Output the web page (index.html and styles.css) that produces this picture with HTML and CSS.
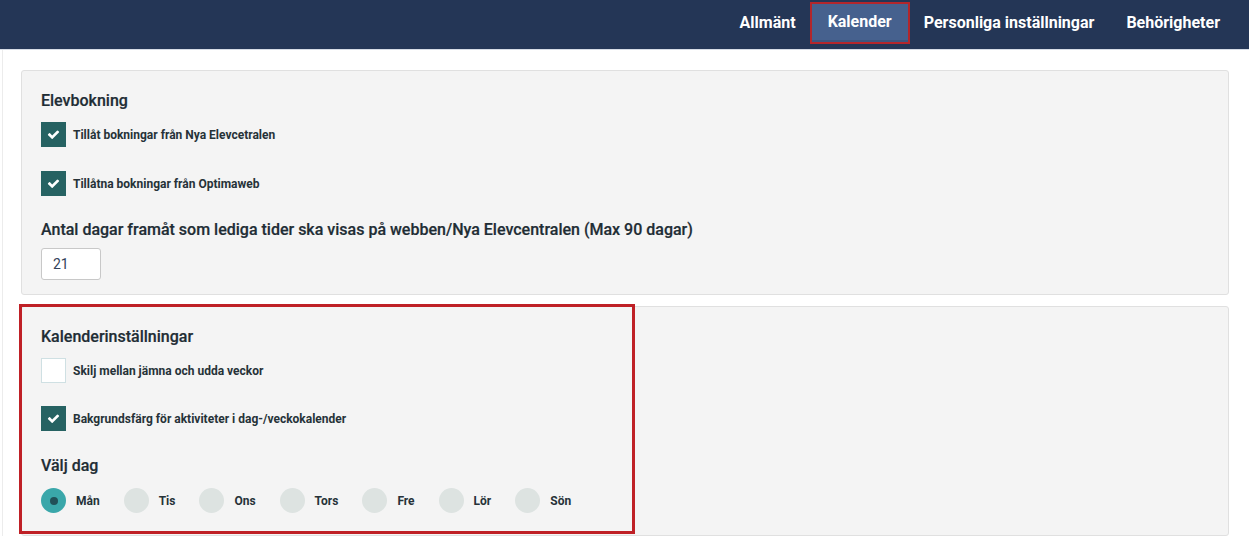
FILE: index.html
```html
<!DOCTYPE html>
<html lang="sv">
<head>
<meta charset="utf-8">
<title>Kalender</title>
<link rel="stylesheet" href="styles.css">
</head>
<body>
<header class="topbar">
  <nav class="tabs">
    <a class="tab">Allmänt</a>
    <a class="tab active">Kalender</a>
    <a class="tab">Personliga inställningar</a>
    <a class="tab">Behörigheter</a>
  </nav>
</header>
<main class="content">
  <section class="panel panel1">
    <h2 class="heading">Elevbokning</h2>
    <label class="check-row">
      <span class="box checked"><svg class="tick" viewBox="0 0 1792 1792"><path d="M1671 566q0 40-28 68l-724 724-136 136q-28 28-68 28t-68-28l-136-136-362-362q-28-28-28-68t28-68l136-136q28-28 68-28t68 28l294 295 656-657q28-28 68-28t68 28l136 136q28 28 28 68z" fill="#fff"/></svg></span>
      <span class="check-label">Tillåt bokningar från Nya Elevcetralen</span>
    </label>
    <label class="check-row">
      <span class="box checked"><svg class="tick" viewBox="0 0 1792 1792"><path d="M1671 566q0 40-28 68l-724 724-136 136q-28 28-68 28t-68-28l-136-136-362-362q-28-28-28-68t28-68l136-136q28-28 68-28t68 28l294 295 656-657q28-28 68-28t68 28l136 136q28 28 28 68z" fill="#fff"/></svg></span>
      <span class="check-label">Tillåtna bokningar från Optimaweb</span>
    </label>
    <h2 class="heading heading-days">Antal dagar framåt som lediga tider ska visas på webben/Nya Elevcentralen (Max 90 dagar)</h2>
    <div class="input">21</div>
  </section>
  <section class="panel panel2">
    <div class="highlight"></div>
    <h2 class="heading">Kalenderinställningar</h2>
    <label class="check-row tight">
      <span class="box"></span>
      <span class="check-label">Skilj mellan jämna och udda veckor</span>
    </label>
    <label class="check-row">
      <span class="box checked"><svg class="tick" viewBox="0 0 1792 1792"><path d="M1671 566q0 40-28 68l-724 724-136 136q-28 28-68 28t-68-28l-136-136-362-362q-28-28-28-68t28-68l136-136q28-28 68-28t68 28l294 295 656-657q28-28 68-28t68 28l136 136q28 28 28 68z" fill="#fff"/></svg></span>
      <span class="check-label">Bakgrundsfärg för aktiviteter i dag-/veckokalender</span>
    </label>
    <h2 class="heading heading-day">Välj dag</h2>
    <div class="radios">
      <span class="radio-item"><span class="radio on"></span><span class="radio-label">Mån</span></span>
      <span class="radio-item"><span class="radio"></span><span class="radio-label">Tis</span></span>
      <span class="radio-item"><span class="radio"></span><span class="radio-label">Ons</span></span>
      <span class="radio-item"><span class="radio"></span><span class="radio-label">Tors</span></span>
      <span class="radio-item"><span class="radio"></span><span class="radio-label">Fre</span></span>
      <span class="radio-item"><span class="radio"></span><span class="radio-label">Lör</span></span>
      <span class="radio-item"><span class="radio"></span><span class="radio-label">Sön</span></span>
    </div>
  </section>
</main>
</body>
</html>
```
FILE: styles.css
```css
* { box-sizing: border-box; }
html, body { margin: 0; padding: 0; }
body {
  font-family: Roboto, "Liberation Sans", sans-serif;
  color: #263238;
  background: #fff;
  height: 538px;
  overflow: hidden;
}
.topbar {
  height: 50px;
  background: #243656;
  border-bottom: 1px solid #d6dce6;
  display: flex;
  justify-content: flex-end;
}
.tabs {
  display: flex;
  align-items: flex-start;
  padding-right: 13px;
  padding-top: 4px;
}
.tab {
  color: #fff;
  font-weight: 700;
  font-size: 16px;
  padding: 9px 16px 0;
  height: 39px;
}
.tab.active {
  background: #46618e;
  outline: 2px solid #b3262b;
  padding: 8px 16px 0;
  height: 38px;
  border-bottom: 2px solid #3c567f;
}
.content {
  padding: 20px 20px 0 18px;
  display: flex;
  flex-direction: column;
  gap: 11px;
  border-left: 1px solid #ececec;
  margin-left: 2px;
}
.panel {
  position: relative;
  background: #f4f4f4;
  border: 1px solid #e0e0e0;
  border-radius: 3px;
  padding: 20px 20px 15px 19px;
}
.panel1 { height: 225px; }
.panel2 { height: 230px; }
.heading {
  margin: 0 0 11px;
  font-size: 16px;
  font-weight: 500;
  line-height: 20px;
  color: #1f2d35;
  -webkit-text-stroke: 0.2px #1f2d35;
}
.heading-days { margin-top: 24px; margin-bottom: 8px; }
.heading-day { margin-top: 25px; margin-bottom: 12px; }
.check-row {
  display: flex;
  align-items: center;
  gap: 7px;
  height: 25px;
  margin-bottom: 24px;
}
.check-row.tight { margin-bottom: 23px; }
.check-row:last-of-type { margin-bottom: 0; }
.box {
  width: 25px;
  height: 25px;
  background: #fff;
  border: 1px solid #cfe0e3;
  display: flex;
  align-items: center;
  justify-content: center;
}
.box.checked {
  background: #266262;
  border-color: #266262;
}
.tick { width: 13px; height: 13px; }
.check-label {
  font-size: 12px;
  font-weight: 700;
  color: #263238;
}
.input {
  width: 60px;
  height: 32px;
  background: #fff;
  border: 1px solid #c8c8c8;
  border-radius: 3px;
  padding: 7px 11px;
  font-size: 14px;
  color: #34435a;
  line-height: 16px;
}
.radios {
  display: flex;
  gap: 24px;
  align-items: center;
}
.radio-item {
  display: flex;
  align-items: center;
  gap: 10px;
}
.radio {
  width: 25px;
  height: 25px;
  border-radius: 50%;
  background: #dde3e1;
  display: flex;
  align-items: center;
  justify-content: center;
}
.radio.on { background: #3aa7aa; }
.radio.on::after {
  content: "";
  width: 8px;
  height: 8px;
  border-radius: 50%;
  background: #215058;
}
.radio-label {
  font-size: 12px;
  font-weight: 700;
}
.highlight {
  position: absolute;
  left: -3px;
  top: -3px;
  width: 616px;
  height: 230px;
  border: 3px solid #bf2026;
  pointer-events: none;
}
```
